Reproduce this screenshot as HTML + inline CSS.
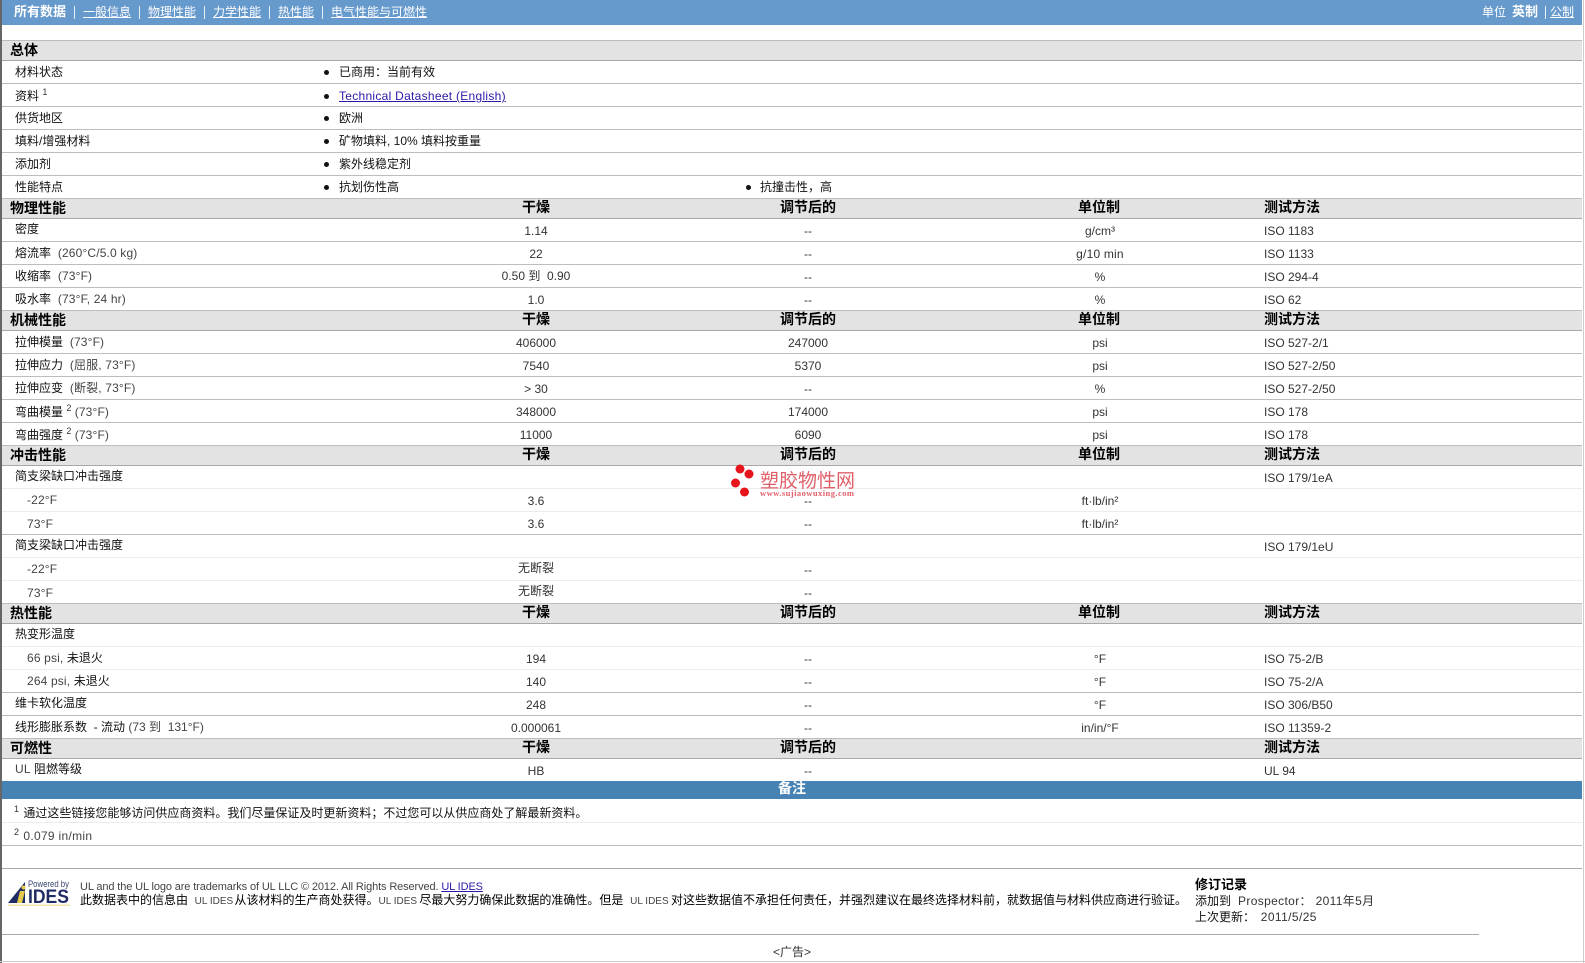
<!DOCTYPE html>
<html lang="zh"><head><meta charset="utf-8"><title>数据表</title>
<style>
html,body{margin:0;padding:0;background:#fff}
body{position:relative;width:1585px;height:963px;overflow:hidden;font:12px/16px "Liberation Sans","WenQuanYi Zen Hei","Noto Sans CJK SC",sans-serif;color:#111}
.abs,.r,.b,.r>*,.b>*{position:absolute;white-space:nowrap}
.r{left:2px;width:1580px;height:22px;border-bottom:1px solid #bdbdbd}
.r.s{border-bottom-color:#ececec}
.b{left:2px;width:1580px;height:19px;background:#e3e3e3;border-bottom:1px solid #a8a8a8;font-weight:bold;font-size:14px;color:#000}
.l{left:13px;top:2px;line-height:16px}
.l.g{top:3px}
.l.h{top:3px}
.l.i{left:25px}
.l i{font-style:normal;color:#444;letter-spacing:.15px}
.a,.c,.u{width:200px;text-align:center;top:3px;line-height:18px;color:#333}
.a{left:434px}.c{left:706px}.u{left:998px}
.m{left:1262px;top:3px;line-height:18px;color:#333}
.b>span{top:-2px;line-height:20px}
.b .t{left:8px;top:-1px}
.b .u{left:997px}
.b .a,.b .c,.b .u,.b .m{color:#000}
sup{font-size:9px;line-height:0;vertical-align:5px;color:#333}
.d{left:322px;top:9px;width:5px;height:5px;border-radius:50%;background:#111}
.x{left:337px;top:3px;line-height:16px}
.tc{font-family:"Noto Sans CJK TC",sans-serif}
.nav{position:absolute;top:4px;line-height:16px;color:#fff;white-space:nowrap;text-decoration:underline}
.sep{position:absolute;top:6px;width:1px;height:13px;background:#e8f0f8}
a{color:#2a1aa8}
.sm{font-size:10px;color:#444}
</style></head><body>

<div class="abs" style="left:0;top:0;width:2px;height:963px;background:#666"></div>
<div class="abs" style="left:1583px;top:0;width:1px;height:963px;background:#ccc"></div>
<div class="abs" style="left:0;top:961px;width:1585px;height:1px;background:#ccc"></div>

<div class="abs" style="left:2px;top:0;width:1580px;height:25px;background:#6699cc"></div>
<span class="nav" style="left:14px;font-weight:bold;font-size:13px;text-decoration:none">所有数据</span><i class="sep" style="left:74px"></i>
<span class="nav" style="left:83px">一般信息</span><i class="sep" style="left:139px"></i>
<span class="nav" style="left:148px">物理性能</span><i class="sep" style="left:204px"></i>
<span class="nav" style="left:213px">力学性能</span><i class="sep" style="left:269px"></i>
<span class="nav" style="left:278px">热性能</span><i class="sep" style="left:322px"></i>
<span class="nav" style="left:331px">电气性能与可燃性</span>
<span class="nav" style="left:1482px;text-decoration:none">单位</span>
<span class="nav" style="left:1512px;font-weight:bold;font-size:13px;text-decoration:none">英制</span><i class="sep" style="left:1545px"></i>
<span class="nav" style="left:1550px">公制</span>

<div class="abs" style="left:2px;top:40px;width:1580px;height:1px;background:#bdbdbd"></div>
<div class="b" style="top:41px"><span class="t">总体</span></div>
<div class="r" style="top:61px"><span class="l g">材料状态</span><span class="d"></span><span class="x">已商用<span class="tc">：</span>当前有效</span></div>
<div class="r" style="top:84px"><span class="l" style="top:4px">资料 <sup>1</sup></span><span class="d" style="top:10px"></span><span class="x" style="top:4px;letter-spacing:.28px"><a href="#">Technical Datasheet (English)</a></span></div>
<div class="r" style="top:107px"><span class="l g">供货地区</span><span class="d"></span><span class="x">欧洲</span></div>
<div class="r" style="top:130px"><span class="l g">填料/增强材料</span><span class="d"></span><span class="x">矿物填料, 10% 填料按重量</span></div>
<div class="r" style="top:153px"><span class="l g">添加剂</span><span class="d"></span><span class="x">紫外线稳定剂</span></div>
<div class="r" style="top:176px"><span class="l g">性能特点</span><span class="d"></span><span class="x">抗划伤性高</span><span class="d" style="left:744px"></span><span class="x" style="left:758px">抗撞击性<span class="tc">，</span>高</span></div>

<div class="b" style="top:199px"><span class="t">物理性能</span><span class="a">干燥</span><span class="c">调节后的</span><span class="u">单位制</span><span class="m">测试方法</span></div>
<div class="r" style="top:219px"><span class="l">密度</span><span class="a">1.14</span><span class="c">--</span><span class="u">g/cm³</span><span class="m">ISO 1183</span></div>
<div class="r" style="top:242px"><span class="l h">熔流率 <i>&nbsp;(260°C/5.0 kg)</i></span><span class="a">22</span><span class="c">--</span><span class="u" style="letter-spacing:.2px">g/10 min</span><span class="m">ISO 1133</span></div>
<div class="r" style="top:265px"><span class="l h">收缩率 <i>&nbsp;(73°F)</i></span><span class="a" style="top:2px">0.50 到&nbsp; 0.90</span><span class="c">--</span><span class="u">%</span><span class="m">ISO 294-4</span></div>
<div class="r" style="top:288px"><span class="l h">吸水率 <i>&nbsp;(73°F, 24 hr)</i></span><span class="a">1.0</span><span class="c">--</span><span class="u">%</span><span class="m">ISO 62</span></div>

<div class="b" style="top:311px"><span class="t">机械性能</span><span class="a">干燥</span><span class="c">调节后的</span><span class="u">单位制</span><span class="m">测试方法</span></div>
<div class="r" style="top:331px"><span class="l h">拉伸模量 <i>&nbsp;(73°F)</i></span><span class="a">406000</span><span class="c">247000</span><span class="u">psi</span><span class="m">ISO 527-2/1</span></div>
<div class="r" style="top:354px"><span class="l h">拉伸应力 <i>&nbsp;(屈服, 73°F)</i></span><span class="a">7540</span><span class="c">5370</span><span class="u">psi</span><span class="m">ISO 527-2/50</span></div>
<div class="r" style="top:377px"><span class="l h">拉伸应变 <i>&nbsp;(断裂, 73°F)</i></span><span class="a">&gt; 30</span><span class="c">--</span><span class="u">%</span><span class="m">ISO 527-2/50</span></div>
<div class="r" style="top:400px"><span class="l" style="top:4px">弯曲模量 <sup>2</sup> <i>(73°F)</i></span><span class="a">348000</span><span class="c">174000</span><span class="u">psi</span><span class="m">ISO 178</span></div>
<div class="r" style="top:423px"><span class="l" style="top:4px">弯曲强度 <sup>2</sup> <i>(73°F)</i></span><span class="a">11000</span><span class="c">6090</span><span class="u">psi</span><span class="m">ISO 178</span></div>

<div class="b" style="top:446px"><span class="t">冲击性能</span><span class="a">干燥</span><span class="c">调节后的</span><span class="u">单位制</span><span class="m">测试方法</span></div>
<div class="r s" style="top:466px"><span class="l">简支梁缺口冲击强度</span><span class="m">ISO 179/1eA</span></div>
<div class="r s" style="top:489px"><span class="l i" style="top:3px"><i>-22°F</i></span><span class="a">3.6</span><span class="c">--</span><span class="u">ft·lb/in²</span></div>
<div class="r" style="top:512px"><span class="l i" style="top:4px"><i>73°F</i></span><span class="a">3.6</span><span class="c">--</span><span class="u">ft·lb/in²</span></div>
<div class="r s" style="top:535px"><span class="l">简支梁缺口冲击强度</span><span class="m">ISO 179/1eU</span></div>
<div class="r s" style="top:558px"><span class="l i" style="top:3px"><i>-22°F</i></span><span class="a" style="top:1px">无断裂</span><span class="c">--</span></div>
<div class="r" style="top:581px"><span class="l i" style="top:4px"><i>73°F</i></span><span class="a" style="top:1px">无断裂</span><span class="c">--</span></div>

<div class="b" style="top:604px"><span class="t">热性能</span><span class="a">干燥</span><span class="c">调节后的</span><span class="u">单位制</span><span class="m">测试方法</span></div>
<div class="r s" style="top:624px"><span class="l">热变形温度</span></div>
<div class="r s" style="top:647px"><span class="l i" style="top:3px"><i>66 psi, </i>未退火</span><span class="a">194</span><span class="c">--</span><span class="u">°F</span><span class="m">ISO 75-2/B</span></div>
<div class="r" style="top:670px"><span class="l i" style="top:3px"><i>264 psi, </i>未退火</span><span class="a">140</span><span class="c">--</span><span class="u">°F</span><span class="m">ISO 75-2/A</span></div>
<div class="r" style="top:693px"><span class="l">维卡软化温度</span><span class="a">248</span><span class="c">--</span><span class="u">°F</span><span class="m">ISO 306/B50</span></div>
<div class="r" style="top:716px"><span class="l h">线形膨胀系数 &nbsp;- 流动 <i style="letter-spacing:0">(73 到&nbsp; 131°F)</i></span><span class="a">0.000061</span><span class="c">--</span><span class="u">in/in/°F</span><span class="m">ISO 11359-2</span></div>

<div class="b" style="top:739px"><span class="t">可燃性</span><span class="a">干燥</span><span class="c">调节后的</span><span class="m">测试方法</span></div>
<div class="r" style="top:759px;border:0"><span class="l"><i>UL</i> 阻燃等级</span><span class="a">HB</span><span class="c">--</span><span class="m">UL 94</span></div>

<div class="abs" style="left:2px;top:781px;width:1580px;height:18px;background:#4682b4;color:#fff;font-weight:bold;font-size:14px;line-height:14px;text-align:center">备注</div>
<div class="r s" style="top:800px"><span class="l" style="left:12px;top:5px"><sup>1</sup> <span style="margin-left:1px">通过这些链接您能够访问供应商资料。我们尽量保证及时更新资料<span class="tc">；</span>不过您可以从供应商处了解最新资料。</span></span></div>
<div class="r" style="top:823px"><span class="l" style="left:12px;top:5px"><sup>2</sup> <i style="margin-left:1px;letter-spacing:.3px">0.079 in/min</i></span></div>
<div class="abs" style="left:2px;top:868px;width:1580px;height:1px;background:#aaa"></div>

<!-- IDES logo -->
<svg class="abs" style="left:6px;top:878px" width="70" height="30" viewBox="0 0 70 30">
<path d="M2 25 L19 4 L19 25 Z" fill="#1f2c63"/>
<path d="M14 13 L19 13 L16 25 L11 25 Z" fill="#e6c84a"/>
<circle cx="17.500" cy="9.500" r="2" fill="#e6c84a"/>
<rect x="2" y="26.500" width="62" height="1.500" fill="#f0e3a8"/>
<text x="22" y="9" font-family="Liberation Sans" font-size="9" fill="#3a4470" textLength="41" lengthAdjust="spacingAndGlyphs">Powered by</text>
<text x="22" y="25" font-family="Liberation Sans" font-size="19" font-weight="bold" fill="#1f2c63" textLength="41" lengthAdjust="spacingAndGlyphs">IDES</text>
</svg>

<span class="abs" style="left:80px;top:879px;color:#444;font-size:11px;letter-spacing:-.12px">UL and the UL logo are trademarks of UL LLC © 2012. All Rights Reserved. <a href="#">UL IDES</a></span>
<span class="abs" style="left:80px;top:892px;color:#000">此数据表中的信息由 &nbsp;<span class="sm" style="margin-right:-2px">UL IDES</span> 从该材料的生产商处获得。<span class="sm" style="margin-right:-1px">UL IDES</span> 尽最大努力确保此数据的准确性。但是 &nbsp;<span class="sm" style="margin-right:-1px">UL IDES</span> 对这些数据值不承担任何责任，并强烈建议在最终选择材料前，就数据值与材料供应商进行验证。</span>
<span class="abs" style="left:1195px;top:877px;font-weight:bold;font-size:13px;color:#000">修订记录</span>
<span class="abs" style="left:1195px;top:893px">添加到 <span style="color:#333;letter-spacing:.35px">&nbsp;Prospector：&nbsp;2011年5月</span></span>
<span class="abs" style="left:1195px;top:909px">上次更新：<span style="color:#333;letter-spacing:.4px;margin-left:2px">&nbsp;2011/5/25</span></span>
<div class="abs" style="left:2px;top:934px;width:1477px;height:1px;background:#aaa"></div>
<span class="abs" style="left:773px;top:944px;color:#333">&lt;广告&gt;</span>

<!-- watermark -->
<svg class="abs" style="left:728px;top:462px" width="135" height="40" viewBox="0 0 135 40">
<circle cx="12" cy="7" r="4.500" fill="#e8141c"/><circle cx="21" cy="12" r="4.500" fill="#e8141c"/>
<circle cx="7.500" cy="21" r="4.500" fill="#e8141c"/><circle cx="16.500" cy="30" r="4.500" fill="#e8141c"/>
<text x="32" y="25" font-family="WenQuanYi Zen Hei,Noto Sans CJK SC,sans-serif" font-size="19" fill="#e0606a">塑胶物性网</text>
<text x="32" y="34" font-family="Liberation Serif" font-weight="bold" font-size="8.500" fill="#e0606a" textLength="94">www.sujiaowuxing.com</text>
</svg>
</body></html>
